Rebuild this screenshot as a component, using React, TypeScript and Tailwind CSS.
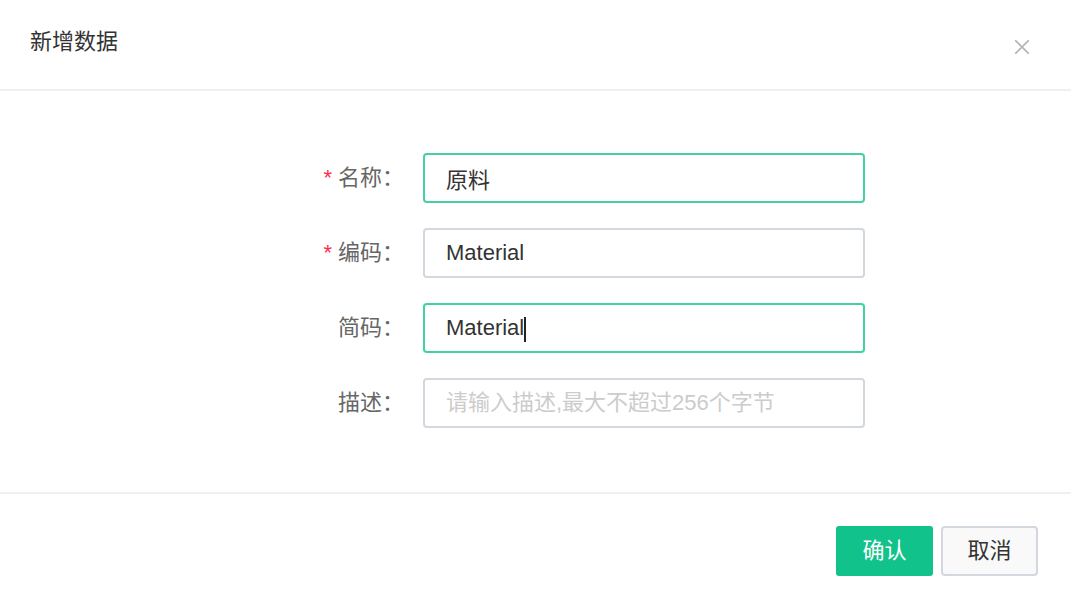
import { useState } from 'react';

type Field = {
  id: string;
  label: string;
  value: string;
  required?: boolean;
  active?: boolean;
  caret?: boolean;
  placeholder?: string;
};

const fields: Field[] = [
  { id: 'name', label: '名称', value: '原料', required: true, active: true },
  { id: 'code', label: '编码', value: 'Material', required: true },
  { id: 'short', label: '简码', value: 'Material', active: true, caret: true },
  { id: 'desc', label: '描述', value: '', placeholder: '请输入描述,最大不超过256个字节' },
];

function FormRow({ field }: { field: Field }) {
  const [value, setValue] = useState(field.value);
  return (
    <div className="flex items-center">
      <label htmlFor={field.id} className="mr-[19px] w-[198px] shrink-0 text-right text-[#666666]">
        {field.required && <span className="mr-1.5 text-[#ff2d4b]">*</span>}
        {field.label}：
      </label>
      <div className="relative min-w-0 flex-1">
        <input
          id={field.id}
          type="text"
          required={field.required}
          value={value}
          placeholder={field.placeholder}
          onChange={(e) => setValue(e.target.value)}
          className={`block h-[50px] w-full rounded-[4px] border-2 bg-white px-[21px] leading-[46px] text-[#333333] outline-none placeholder:leading-[46px] placeholder:text-[#cccccc] ${
            field.active ? 'border-[#45d0a3]' : 'border-[#d3d7de]'
          }`}
        />
        {field.caret && value === field.value && (
          <span aria-hidden="true" className="absolute top-3.5 left-[101px] h-[25px] w-0.5 bg-[#222222]" />
        )}
      </div>
    </div>
  );
}

export default function App() {
  return (
    <form
      className="flex min-h-screen flex-col bg-white font-['Liberation_Sans','Noto_Sans_CJK_SC',sans-serif] text-[22px] leading-[32px]"
      onSubmit={(e) => e.preventDefault()}
    >
      <header className="flex h-[91px] items-center justify-between border-b-2 border-[#f0f0f0] pr-10 pl-[30px]">
        <h1 className="pb-1.5 text-[#333333]">新增数据</h1>
        <button type="button" aria-label="关闭" className="mt-1 p-0.5">
          <svg viewBox="0 0 14 14" className="size-3.5" fill="none" stroke="#b5b5b5" strokeWidth="1.7">
            <path d="M0 0L14 14M14 0L0 14" />
          </svg>
        </button>
      </header>
      <main className="flex flex-col gap-[25px] px-[206px] pt-[62px] pb-16">
        {fields.map((field) => (
          <FormRow key={field.id} field={field} />
        ))}
      </main>
      <footer className="flex justify-end gap-2 border-t-2 border-[#f0f0f0] pt-8 pr-[33px] pb-6">
        <button type="submit" className="h-[50px] w-[97px] rounded-[3px] bg-[#12c28b] text-white">
          确认
        </button>
        <button
          type="button"
          className="h-[50px] w-[97px] rounded-[4px] border-2 border-[#d3d7de] bg-[#f9f9f9] text-[#333333]"
        >
          取消
        </button>
      </footer>
    </form>
  );
}
